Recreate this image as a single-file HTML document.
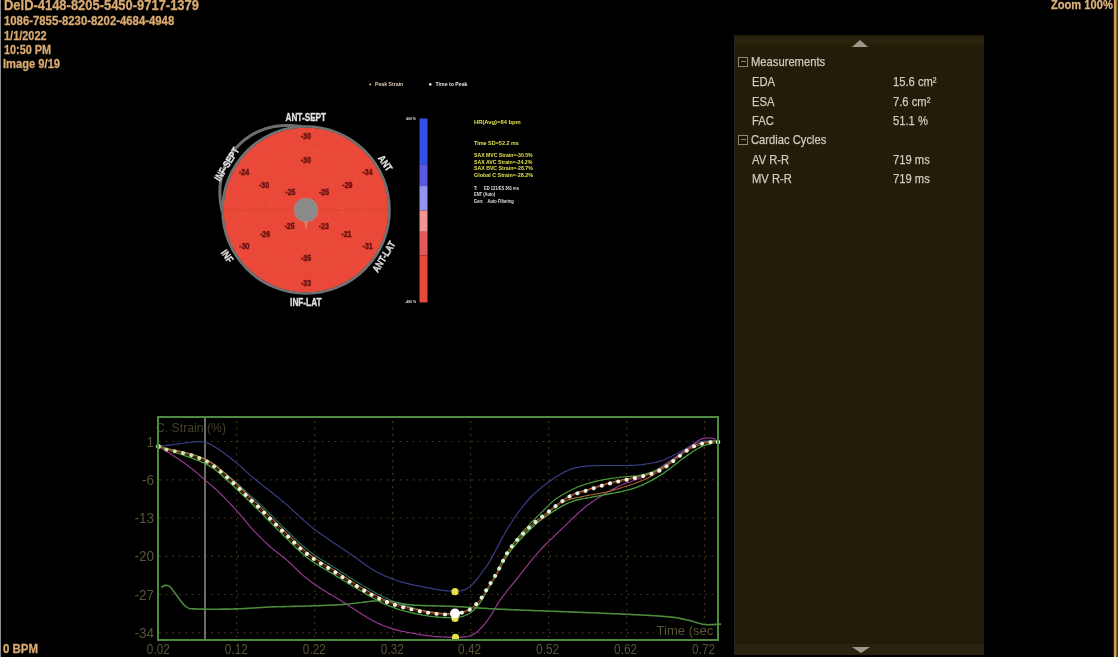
<!DOCTYPE html>
<html><head><meta charset="utf-8">
<style>
html,body{margin:0;padding:0;background:#000;}
body{width:1118px;height:657px;position:relative;overflow:hidden;font-family:"Liberation Sans",sans-serif;}
.t{position:absolute;white-space:nowrap;line-height:1;}
.or{color:#dcac70;font-weight:bold;-webkit-text-stroke:0.3px #d0a470;}
.panel{position:absolute;left:735px;top:35px;width:249px;height:620px;background:#221c08;}
.pt{position:absolute;white-space:nowrap;line-height:1;color:#d4d0c6;-webkit-text-stroke:0.25px #c8c4ba;font-size:13.2px;transform:scaleX(0.85);transform-origin:0 0;}
.box{position:absolute;width:8.4px;height:7.6px;border:1.3px solid #8e8870;background:#1c1808;}
.box:after{content:"";position:absolute;left:2px;top:3px;width:5px;height:1.2px;background:#8a8676;}
.ax{position:absolute;white-space:nowrap;line-height:1;color:#6a6440;font-size:11px;}
#wrap{position:absolute;left:0;top:0;width:1118px;height:657px;overflow:hidden;background:#000;filter:blur(0.35px);}
</style></head><body><div id="wrap">
<div style="position:absolute;left:0;top:0;width:1px;height:657px;background:#8a8d92"></div>
<div style="position:absolute;left:1113px;top:0;width:1px;height:657px;background:#3a1c08"></div>
<div style="position:absolute;left:1114px;top:0;width:2px;height:657px;background:#cc9a5e"></div>
<div style="position:absolute;left:1116px;top:0;width:1px;height:657px;background:#8a6a30"></div>
<div style="position:absolute;left:1117px;top:0;width:1px;height:657px;background:#4a3a12"></div>

<div class="t or" style="left:3.5px;top:-2px;font-size:14.3px;transform:scaleX(0.905);transform-origin:0 0">DeID-4148-8205-5450-9717-1379</div>
<div class="t or" style="left:3.5px;top:15.3px;font-size:12.4px;transform:scaleX(0.915);transform-origin:0 0">1086-7855-8230-8202-4684-4948</div>
<div class="t or" style="left:3.5px;top:29.7px;font-size:12.4px;transform:scaleX(0.884);transform-origin:0 0">1/1/2022</div>
<div class="t or" style="left:3.5px;top:44px;font-size:12.4px;transform:scaleX(0.878);transform-origin:0 0">10:50 PM</div>
<div class="t or" style="left:3px;top:58.4px;font-size:12.4px;transform:scaleX(0.9);transform-origin:0 0">Image 9/19</div>
<div class="t or" style="left:1050.5px;top:-2.5px;font-size:13px;transform:scaleX(0.855);transform-origin:0 0;color:#dcb67e">Zoom 100%</div>
<div class="t or" style="left:2.5px;top:643.4px;font-size:12.6px;transform:scaleX(0.91);transform-origin:0 0">0 BPM</div>

<!-- panel -->
<div style="position:absolute;left:734px;top:35px;width:2px;height:620px;background:#28261a"></div>
<div class="panel">
  <div style="position:absolute;left:0;top:0;width:249px;height:14px;background:linear-gradient(#201c06,#2c260e 40%,#221c08)"></div>
  <div style="position:absolute;left:117px;top:5px;width:0;height:0;border-left:8.5px solid transparent;border-right:8.5px solid transparent;border-bottom:7px solid #9c988c"></div>
  <div style="position:absolute;left:0;top:609px;width:249px;height:11px;background:#28220e"></div>
  <div style="position:absolute;left:116.5px;top:611.8px;width:0;height:0;border-left:9px solid transparent;border-right:9px solid transparent;border-top:6.5px solid #9c988c"></div>
  <div class="box" style="left:3px;top:22.0px"></div>
  <div class="pt" style="left:16px;top:20.3px">Measurements</div>
  <div class="pt" style="left:17px;top:40.3px">EDA</div>
  <div class="pt" style="left:158px;top:40.3px">15.6 cm²</div>
  <div class="pt" style="left:17px;top:60.3px">ESA</div>
  <div class="pt" style="left:158px;top:60.3px">7.6 cm²</div>
  <div class="pt" style="left:17px;top:79.3px">FAC</div>
  <div class="pt" style="left:158px;top:79.3px">51.1 %</div>
  <div class="box" style="left:3px;top:100.0px"></div>
  <div class="pt" style="left:16px;top:98.3px">Cardiac Cycles</div>
  <div class="pt" style="left:17px;top:118.3px">AV R-R</div>
  <div class="pt" style="left:158px;top:118.3px">719 ms</div>
  <div class="pt" style="left:17px;top:137.3px">MV R-R</div>
  <div class="pt" style="left:158px;top:137.3px">719 ms</div>
</div>

<svg width="1118" height="657" style="position:absolute;left:0;top:0">
<defs><filter id="nb" x="-20%" y="-20%" width="140%" height="140%"><feGaussianBlur stdDeviation="0.35"/></filter></defs>
<circle cx="306" cy="210" r="82.5" fill="#ea4838"/>
<path d="M301.6,126.1 L300.2,126.2 L298.7,126.3 L297.3,126.1 L295.8,125.9 L294.3,125.8 L292.8,125.7 L291.3,125.6 L289.8,125.5 L288.3,125.5 L286.8,125.5 L285.3,125.5 L283.8,125.5 L282.3,125.6 L280.7,125.7 L279.2,125.9 L277.7,126.1 L276.1,126.3 L274.6,126.5 L273.1,126.8 L271.6,127.1 L270.1,127.5 L268.5,127.9 L267.0,128.3 L265.5,128.7 L264.1,129.2 L262.6,129.8 L261.1,130.3 L259.6,130.9 L258.2,131.6 L256.8,132.2 L255.4,132.9 L254.0,133.7 L252.6,134.4 L251.2,135.2 L249.9,136.1 L248.5,137.0 L247.2,137.9 L245.9,138.8 L244.7,139.8 L243.4,140.8 L242.2,141.8 L241.0,142.9 L239.9,144.0 L238.7,145.1 L237.6,146.2 L236.5,147.4 L235.5,148.6 L234.5,149.8 L233.5,151.1 L232.5,152.4 L231.6,153.7 L230.7,155.0 L229.9,156.3 L229.0,157.7 L228.2,159.1 L227.5,160.5 L226.8,161.9 L226.1,163.3 L225.4,164.8 L224.8,166.2 L224.2,167.7 L223.7,169.2 L223.2,170.7 L222.7,172.2 L222.3,173.7 L221.9,175.2 L221.5,176.7 L221.2,178.3 L220.9,179.8 L220.7,181.4 L220.4,182.9 L220.3,184.4 L220.1,186.0 L220.0,187.5 L219.9,189.1 L219.9,190.6 L219.8,192.1 L219.9,193.7 L219.9,195.2 L220.0,196.7 L220.1,198.2 L220.2,199.7 L220.4,201.2 L220.6,202.7 L220.8,204.2 L221.1,205.7 L221.4,207.1 L221.7,208.6 L222.0,210.0 L222.0,211.5" fill="none" stroke="#6c6e70" stroke-width="3"/>
<circle cx="306" cy="210" r="83.5" fill="none" stroke="#707274" stroke-width="2.6"/>
<circle cx="306" cy="210" r="59.5" fill="none" stroke="#f48070" stroke-width="0.9" stroke-dasharray="4,9" opacity="0.3"/>
<circle cx="306" cy="210" r="36" fill="none" stroke="#f48070" stroke-width="0.9" stroke-dasharray="4,9" opacity="0.3"/>
<line x1="224" y1="210" x2="388" y2="210" stroke="#dc4434" stroke-width="0.8"/>
<line x1="306" y1="128" x2="306" y2="292" stroke="#dc4434" stroke-width="0.6" opacity="0.5"/>
<circle cx="306" cy="210" r="12" fill="#8a8a8a" stroke="#c08070" stroke-width="0.8"/>
<path d="M304,221 L306,232 L308,221 Z" fill="#d89080" opacity="0.6"/>
<text transform="translate(305.8,136.0) scale(0.8,1)" font-size="8.8" font-weight="bold" fill="#641410" stroke="#641410" stroke-width="0.45" text-anchor="middle" font-family="Liberation Sans, sans-serif" dominant-baseline="central" filter="url(#nb)">-30</text>
<text transform="translate(305.8,160.6) scale(0.8,1)" font-size="8.8" font-weight="bold" fill="#641410" stroke="#641410" stroke-width="0.45" text-anchor="middle" font-family="Liberation Sans, sans-serif" dominant-baseline="central" filter="url(#nb)">-30</text>
<text transform="translate(244.0,172.7) scale(0.8,1)" font-size="8.8" font-weight="bold" fill="#641410" stroke="#641410" stroke-width="0.45" text-anchor="middle" font-family="Liberation Sans, sans-serif" dominant-baseline="central" filter="url(#nb)">-24</text>
<text transform="translate(367.6,172.7) scale(0.8,1)" font-size="8.8" font-weight="bold" fill="#641410" stroke="#641410" stroke-width="0.45" text-anchor="middle" font-family="Liberation Sans, sans-serif" dominant-baseline="central" filter="url(#nb)">-34</text>
<text transform="translate(264.0,185.0) scale(0.8,1)" font-size="8.8" font-weight="bold" fill="#641410" stroke="#641410" stroke-width="0.45" text-anchor="middle" font-family="Liberation Sans, sans-serif" dominant-baseline="central" filter="url(#nb)">-30</text>
<text transform="translate(347.4,185.0) scale(0.8,1)" font-size="8.8" font-weight="bold" fill="#641410" stroke="#641410" stroke-width="0.45" text-anchor="middle" font-family="Liberation Sans, sans-serif" dominant-baseline="central" filter="url(#nb)">-29</text>
<text transform="translate(290.4,192.0) scale(0.8,1)" font-size="8.8" font-weight="bold" fill="#641410" stroke="#641410" stroke-width="0.45" text-anchor="middle" font-family="Liberation Sans, sans-serif" dominant-baseline="central" filter="url(#nb)">-25</text>
<text transform="translate(324.0,192.0) scale(0.8,1)" font-size="8.8" font-weight="bold" fill="#641410" stroke="#641410" stroke-width="0.45" text-anchor="middle" font-family="Liberation Sans, sans-serif" dominant-baseline="central" filter="url(#nb)">-25</text>
<text transform="translate(289.6,226.7) scale(0.8,1)" font-size="8.8" font-weight="bold" fill="#641410" stroke="#641410" stroke-width="0.45" text-anchor="middle" font-family="Liberation Sans, sans-serif" dominant-baseline="central" filter="url(#nb)">-25</text>
<text transform="translate(323.8,226.7) scale(0.8,1)" font-size="8.8" font-weight="bold" fill="#641410" stroke="#641410" stroke-width="0.45" text-anchor="middle" font-family="Liberation Sans, sans-serif" dominant-baseline="central" filter="url(#nb)">-23</text>
<text transform="translate(265.0,234.0) scale(0.8,1)" font-size="8.8" font-weight="bold" fill="#641410" stroke="#641410" stroke-width="0.45" text-anchor="middle" font-family="Liberation Sans, sans-serif" dominant-baseline="central" filter="url(#nb)">-26</text>
<text transform="translate(346.4,234.0) scale(0.8,1)" font-size="8.8" font-weight="bold" fill="#641410" stroke="#641410" stroke-width="0.45" text-anchor="middle" font-family="Liberation Sans, sans-serif" dominant-baseline="central" filter="url(#nb)">-21</text>
<text transform="translate(244.4,245.9) scale(0.8,1)" font-size="8.8" font-weight="bold" fill="#641410" stroke="#641410" stroke-width="0.45" text-anchor="middle" font-family="Liberation Sans, sans-serif" dominant-baseline="central" filter="url(#nb)">-30</text>
<text transform="translate(367.7,245.9) scale(0.8,1)" font-size="8.8" font-weight="bold" fill="#641410" stroke="#641410" stroke-width="0.45" text-anchor="middle" font-family="Liberation Sans, sans-serif" dominant-baseline="central" filter="url(#nb)">-31</text>
<text transform="translate(306.0,258.2) scale(0.8,1)" font-size="8.8" font-weight="bold" fill="#641410" stroke="#641410" stroke-width="0.45" text-anchor="middle" font-family="Liberation Sans, sans-serif" dominant-baseline="central" filter="url(#nb)">-35</text>
<text transform="translate(306.0,282.9) scale(0.8,1)" font-size="8.8" font-weight="bold" fill="#641410" stroke="#641410" stroke-width="0.45" text-anchor="middle" font-family="Liberation Sans, sans-serif" dominant-baseline="central" filter="url(#nb)">-33</text>
<text transform="translate(305.8,118.0) rotate(0) scale(0.8,1)" font-size="10.3" font-weight="bold" fill="#e4e4e4" stroke="#d8d8d8" stroke-width="0.35" text-anchor="middle" font-family="Liberation Sans, sans-serif" dominant-baseline="central">ANT-SEPT</text>
<text transform="translate(305.8,302.6) rotate(0) scale(0.8,1)" font-size="10.3" font-weight="bold" fill="#e4e4e4" stroke="#d8d8d8" stroke-width="0.35" text-anchor="middle" font-family="Liberation Sans, sans-serif" dominant-baseline="central">INF-LAT</text>
<text transform="translate(385.1,163.3) rotate(55) scale(0.8,1)" font-size="10.3" font-weight="bold" fill="#e4e4e4" stroke="#d8d8d8" stroke-width="0.35" text-anchor="middle" font-family="Liberation Sans, sans-serif" dominant-baseline="central">ANT</text>
<text transform="translate(384.0,256.8) rotate(-58) scale(0.8,1)" font-size="10.3" font-weight="bold" fill="#e4e4e4" stroke="#d8d8d8" stroke-width="0.35" text-anchor="middle" font-family="Liberation Sans, sans-serif" dominant-baseline="central">ANT-LAT</text>
<text transform="translate(226.9,164.4) rotate(-58) scale(0.8,1)" font-size="10.3" font-weight="bold" fill="#e4e4e4" stroke="#d8d8d8" stroke-width="0.35" text-anchor="middle" font-family="Liberation Sans, sans-serif" dominant-baseline="central">INF-SEPT</text>
<text transform="translate(227.1,256.2) rotate(55) scale(0.8,1)" font-size="10.3" font-weight="bold" fill="#e4e4e4" stroke="#d8d8d8" stroke-width="0.35" text-anchor="middle" font-family="Liberation Sans, sans-serif" dominant-baseline="central">INF</text>
<circle cx="370.2" cy="84.4" r="1" fill="#d8b890"/><text x="375" y="86" font-size="5.2" font-weight="bold" fill="#d8c8b0" font-family="Liberation Sans, sans-serif">Peak Strain</text>
<circle cx="430.3" cy="84.4" r="1.3" fill="#e0e0f0"/><text x="435.5" y="86" font-size="5.2" font-weight="bold" fill="#e0e0e0" font-family="Liberation Sans, sans-serif">Time to Peak</text>
<rect x="419.5" y="118.5" width="8" height="45.7" fill="#3050e8"/>
<rect x="419.5" y="164.2" width="8" height="21.9" fill="#5a5ae0"/>
<rect x="419.5" y="186.1" width="8" height="24.4" fill="#9494f0"/>
<rect x="419.5" y="210.5" width="8" height="21.3" fill="#f09494"/>
<rect x="419.5" y="231.8" width="8" height="23.7" fill="#e05a5a"/>
<rect x="419.5" y="255.5" width="8" height="46.9" fill="#e84a3a"/>
<text x="406" y="120" font-size="3.5" font-weight="bold" fill="#e0e0e0" font-family="Liberation Sans, sans-serif">400 %</text>
<text x="405" y="303" font-size="3.5" font-weight="bold" fill="#e0e0e0" font-family="Liberation Sans, sans-serif">-400 %</text>
<text transform="translate(474,123.6) scale(0.94,1)" font-size="6.2" font-weight="bold" fill="#e0e050" font-family="Liberation Sans, sans-serif">HR(Avg)=84 bpm</text>
<text transform="translate(474,144.5) scale(0.88,1)" font-size="6.2" font-weight="bold" fill="#e0e050" font-family="Liberation Sans, sans-serif">Time SD=52.2 ms</text>
<text transform="translate(474,157.1) scale(0.83,1)" font-size="6.2" font-weight="bold" fill="#e0e050" font-family="Liberation Sans, sans-serif">SAX MVC Strain=-30.5%</text>
<text transform="translate(474,163.5) scale(0.84,1)" font-size="6.2" font-weight="bold" fill="#e0e050" font-family="Liberation Sans, sans-serif">SAX AVC Strain=-24.2%</text>
<text transform="translate(474,170.0) scale(0.84,1)" font-size="6.2" font-weight="bold" fill="#e0e050" font-family="Liberation Sans, sans-serif">SAX BVC Strain=-28.7%</text>
<text transform="translate(474,176.8) scale(0.87,1)" font-size="6.2" font-weight="bold" fill="#e0e050" font-family="Liberation Sans, sans-serif">Global C Strain=-28.2%</text>
<text transform="translate(474,189.6) scale(0.88,1)" font-size="4.6" font-weight="bold" fill="#e0e0e0" font-family="Liberation Sans, sans-serif" xml:space="preserve">T:      ED 121/ES 361 ms</text>
<text transform="translate(474,196.0) scale(0.88,1)" font-size="4.6" font-weight="bold" fill="#e0e0e0" font-family="Liberation Sans, sans-serif" xml:space="preserve">ENT (Auto)  </text>
<text transform="translate(474,202.9) scale(0.88,1)" font-size="4.6" font-weight="bold" fill="#e0e0e0" font-family="Liberation Sans, sans-serif" xml:space="preserve">Gen:    Auto Filtering</text>
<defs><linearGradient id="dotg" gradientUnits="userSpaceOnUse" x1="158" y1="0" x2="718" y2="0"><stop offset="0" stop-color="#bfe8a8"/><stop offset="0.09" stop-color="#c8eab8"/><stop offset="0.14" stop-color="#f4f4e8"/><stop offset="0.55" stop-color="#f4f4ec"/><stop offset="0.6" stop-color="#d0f0d0"/><stop offset="0.72" stop-color="#d8f4e0"/><stop offset="0.8" stop-color="#f4f4f0"/><stop offset="1" stop-color="#e8f4e0"/></linearGradient></defs>
<line x1="159" y1="441.5" x2="717" y2="441.5" stroke="#38341a" stroke-width="1.2" stroke-dasharray="2,4.5"/>
<line x1="159" y1="479.8" x2="717" y2="479.8" stroke="#38341a" stroke-width="1.2" stroke-dasharray="2,4.5"/>
<line x1="159" y1="518.0" x2="717" y2="518.0" stroke="#38341a" stroke-width="1.2" stroke-dasharray="2,4.5"/>
<line x1="159" y1="556.3" x2="717" y2="556.3" stroke="#38341a" stroke-width="1.2" stroke-dasharray="2,4.5"/>
<line x1="159" y1="594.5" x2="717" y2="594.5" stroke="#38341a" stroke-width="1.2" stroke-dasharray="2,4.5"/>
<line x1="159" y1="632.8" x2="717" y2="632.8" stroke="#38341a" stroke-width="1.2" stroke-dasharray="2,4.5"/>
<line x1="236.6" y1="421" x2="236.6" y2="639" stroke="#38341a" stroke-width="1.2" stroke-dasharray="2,4.5"/>
<line x1="314.6" y1="421" x2="314.6" y2="639" stroke="#38341a" stroke-width="1.2" stroke-dasharray="2,4.5"/>
<line x1="392.6" y1="421" x2="392.6" y2="639" stroke="#38341a" stroke-width="1.2" stroke-dasharray="2,4.5"/>
<line x1="470.6" y1="421" x2="470.6" y2="639" stroke="#38341a" stroke-width="1.2" stroke-dasharray="2,4.5"/>
<line x1="548.6" y1="421" x2="548.6" y2="639" stroke="#38341a" stroke-width="1.2" stroke-dasharray="2,4.5"/>
<line x1="626.6" y1="421" x2="626.6" y2="639" stroke="#38341a" stroke-width="1.2" stroke-dasharray="2,4.5"/>
<line x1="704.6" y1="421" x2="704.6" y2="639" stroke="#38341a" stroke-width="1.2" stroke-dasharray="2,4.5"/><text transform="translate(154,446.5) scale(0.94,1)" font-size="14.4" fill="#5a5436" text-anchor="end" font-family="Liberation Sans, sans-serif">1</text>
<text transform="translate(154,484.8) scale(0.94,1)" font-size="14.4" fill="#5a5436" text-anchor="end" font-family="Liberation Sans, sans-serif">-6</text>
<text transform="translate(154,523.0) scale(0.94,1)" font-size="14.4" fill="#5a5436" text-anchor="end" font-family="Liberation Sans, sans-serif">-13</text>
<text transform="translate(154,561.3) scale(0.94,1)" font-size="14.4" fill="#5a5436" text-anchor="end" font-family="Liberation Sans, sans-serif">-20</text>
<text transform="translate(154,599.5) scale(0.94,1)" font-size="14.4" fill="#5a5436" text-anchor="end" font-family="Liberation Sans, sans-serif">-27</text>
<text transform="translate(154,637.8) scale(0.94,1)" font-size="14.4" fill="#5a5436" text-anchor="end" font-family="Liberation Sans, sans-serif">-34</text>
<text transform="translate(158.3,654.2) scale(0.82,1)" font-size="14.4" fill="#5a5436" text-anchor="middle" font-family="Liberation Sans, sans-serif">0.02</text>
<text transform="translate(236.3,654.2) scale(0.82,1)" font-size="14.4" fill="#5a5436" text-anchor="middle" font-family="Liberation Sans, sans-serif">0.12</text>
<text transform="translate(314.3,654.2) scale(0.82,1)" font-size="14.4" fill="#5a5436" text-anchor="middle" font-family="Liberation Sans, sans-serif">0.22</text>
<text transform="translate(392.3,654.2) scale(0.82,1)" font-size="14.4" fill="#5a5436" text-anchor="middle" font-family="Liberation Sans, sans-serif">0.32</text>
<text transform="translate(469.6,654.2) scale(0.82,1)" font-size="14.4" fill="#5a5436" text-anchor="middle" font-family="Liberation Sans, sans-serif">0.42</text>
<text transform="translate(547.6,654.2) scale(0.82,1)" font-size="14.4" fill="#5a5436" text-anchor="middle" font-family="Liberation Sans, sans-serif">0.52</text>
<text transform="translate(625.6,654.2) scale(0.82,1)" font-size="14.4" fill="#5a5436" text-anchor="middle" font-family="Liberation Sans, sans-serif">0.62</text>
<text transform="translate(703.6,654.2) scale(0.82,1)" font-size="14.4" fill="#5a5436" text-anchor="middle" font-family="Liberation Sans, sans-serif">0.72</text>
<text transform="translate(156,432.4) scale(0.9,1)" font-size="13.6" fill="#46422c" font-family="Liberation Sans, sans-serif">C. Strain (%)</text>
<rect x="654" y="622" width="62" height="15" fill="#000"/><text transform="translate(656.5,634.7) scale(0.96,1)" font-size="13.6" fill="#5a5436" font-family="Liberation Sans, sans-serif">Time (sec</text>
<line x1="205" y1="418" x2="205" y2="639" stroke="#888888" stroke-width="1.6"/>
<path d="M158.5,446.5 L160.8,446.2 L162.2,446.0 L164.0,445.8 L166.0,445.5 L168.2,445.2 L170.5,444.9 L172.7,444.6 L174.9,444.4 L177.0,444.1 L179.2,443.8 L181.3,443.5 L183.5,443.3 L185.6,443.0 L187.7,442.7 L189.8,442.5 L191.9,442.2 L194.0,442.0 L196.1,441.7 L198.2,441.6 L200.2,441.5 L202.2,441.7 L204.1,442.0 L206.0,442.5 L207.8,443.1 L209.6,443.9 L211.4,444.9 L213.2,445.9 L215.1,447.0 L216.9,448.2 L218.6,449.3 L220.3,450.5 L222.0,451.6 L223.6,452.8 L225.2,454.0 L226.8,455.2 L228.5,456.4 L230.1,457.7 L231.7,459.0 L233.3,460.3 L234.9,461.6 L236.5,462.9 L238.1,464.2 L239.6,465.6 L241.2,466.9 L242.7,468.3 L244.2,469.7 L245.7,471.1 L247.2,472.4 L248.7,473.8 L250.1,475.1 L251.6,476.4 L253.1,477.7 L254.6,479.0 L256.1,480.2 L257.7,481.5 L259.2,482.7 L260.7,483.9 L262.3,485.1 L263.8,486.3 L265.4,487.5 L267.0,488.7 L268.5,489.9 L270.1,491.2 L271.6,492.3 L273.1,493.5 L274.6,494.8 L276.1,496.0 L277.7,497.3 L279.3,498.6 L280.9,499.9 L282.6,501.3 L284.3,502.7 L285.9,504.1 L287.5,505.5 L289.0,506.8 L290.4,508.1 L291.9,509.4 L293.3,510.8 L294.8,512.1 L296.3,513.5 L297.8,514.9 L299.4,516.4 L300.9,517.8 L302.5,519.2 L304.0,520.6 L305.6,522.1 L307.2,523.4 L308.8,524.8 L310.4,526.1 L312.0,527.4 L313.6,528.7 L315.3,530.0 L317.0,531.2 L318.7,532.4 L320.4,533.7 L322.1,534.9 L323.8,536.1 L325.6,537.3 L327.3,538.5 L329.0,539.6 L330.7,540.7 L332.4,541.9 L334.0,542.9 L335.6,544.0 L337.2,545.1 L338.8,546.2 L340.4,547.3 L342.1,548.5 L343.9,549.6 L345.6,550.8 L347.3,552.0 L348.9,553.1 L350.5,554.1 L352.1,555.2 L353.6,556.3 L355.2,557.3 L356.7,558.4 L358.3,559.5 L359.9,560.7 L361.5,561.8 L363.1,563.0 L364.6,564.2 L366.3,565.4 L367.9,566.5 L369.6,567.7 L371.3,568.8 L373.1,569.9 L374.8,570.9 L376.5,571.8 L378.3,572.7 L380.0,573.6 L381.7,574.4 L383.5,575.2 L385.3,576.1 L387.2,576.8 L389.0,577.6 L391.0,578.4 L392.9,579.1 L394.9,579.8 L396.9,580.5 L398.9,581.2 L400.9,581.8 L402.8,582.3 L404.8,582.9 L406.9,583.4 L408.9,583.9 L411.0,584.4 L413.1,584.8 L415.3,585.3 L417.4,585.7 L419.5,586.2 L421.5,586.6 L423.5,586.9 L425.5,587.3 L427.4,587.7 L429.3,588.1 L431.3,588.4 L433.3,588.8 L435.4,589.2 L437.5,589.6 L439.5,589.9 L441.4,590.2 L443.3,590.4 L445.1,590.6 L447.0,590.8 L448.9,591.0 L450.9,591.1 L453.0,591.1 L455.1,591.1 L457.2,591.1 L459.3,590.9 L461.3,590.7 L463.2,590.2 L465.0,589.6 L466.7,588.8 L468.4,587.8 L469.9,586.7 L471.4,585.4 L472.8,584.0 L474.2,582.5 L475.5,580.9 L476.8,579.3 L478.1,577.7 L479.4,576.0 L480.6,574.3 L481.8,572.7 L482.9,571.2 L484.0,569.7 L485.1,568.3 L486.1,566.8 L487.2,565.3 L488.3,563.6 L489.4,561.8 L490.4,560.1 L491.4,558.4 L492.3,556.8 L493.1,555.1 L494.1,553.4 L495.0,551.7 L495.9,549.9 L496.9,548.0 L498.0,546.1 L499.0,544.1 L500.1,542.1 L501.1,540.1 L502.2,538.1 L503.3,536.1 L504.4,534.2 L505.4,532.3 L506.5,530.4 L507.6,528.6 L508.6,526.8 L509.7,525.1 L510.9,523.3 L512.0,521.5 L513.2,519.7 L514.4,517.9 L515.6,516.2 L516.8,514.5 L518.0,512.8 L519.2,511.1 L520.4,509.5 L521.6,508.0 L522.8,506.4 L524.0,504.9 L525.2,503.4 L526.4,502.0 L527.7,500.5 L529.0,499.0 L530.4,497.5 L531.9,496.0 L533.4,494.5 L535.0,493.1 L536.5,491.6 L538.1,490.3 L539.7,488.9 L541.3,487.7 L542.9,486.4 L544.5,485.2 L546.1,484.0 L547.7,482.8 L549.3,481.6 L551.0,480.5 L552.6,479.3 L554.3,478.1 L556.0,477.0 L557.8,475.9 L559.5,474.8 L561.2,473.8 L562.9,472.8 L564.6,471.9 L566.4,471.1 L568.1,470.3 L569.9,469.6 L571.6,468.9 L573.3,468.4 L575.0,467.9 L576.8,467.5 L578.6,467.1 L580.5,466.8 L582.6,466.5 L584.8,466.3 L587.0,466.1 L589.2,465.9 L591.2,465.8 L593.2,465.7 L595.1,465.6 L597.0,465.6 L599.0,465.5 L601.0,465.5 L603.1,465.5 L605.3,465.5 L607.4,465.5 L609.7,465.5 L611.9,465.5 L614.1,465.5 L616.4,465.5 L618.6,465.5 L620.8,465.5 L622.9,465.5 L625.0,465.5 L627.1,465.5 L629.1,465.4 L631.0,465.4 L633.0,465.3 L635.0,465.2 L637.2,465.0 L639.4,464.8 L641.7,464.6 L643.9,464.3 L646.0,464.0 L648.1,463.7 L650.0,463.4 L651.9,463.0 L653.7,462.7 L655.5,462.3 L657.2,461.8 L659.0,461.3 L660.8,460.8 L662.7,460.2 L664.5,459.5 L666.4,458.8 L668.2,458.0 L670.0,457.2 L671.7,456.3 L673.5,455.4 L675.3,454.5 L677.1,453.5 L678.9,452.6 L680.7,451.6 L682.6,450.5 L684.4,449.5 L686.3,448.4 L688.1,447.3 L690.0,446.2 L691.9,445.2 L693.7,444.3 L695.6,443.4 L697.5,442.6 L699.5,442.0 L701.6,441.5 L703.7,441.2 L705.9,440.9 L708.0,440.8 L710.0,440.8 L711.8,440.9 L713.3,440.9 L714.4,440.9" fill="none" stroke="#363e86" stroke-width="1.2"/>
<path d="M158.5,446.5 L160.3,447.6 L161.5,448.3 L162.9,449.2 L164.6,450.2 L166.4,451.3 L168.3,452.4 L170.2,453.6 L172.1,454.8 L173.9,456.0 L175.6,457.2 L177.4,458.3 L179.1,459.5 L180.8,460.7 L182.5,461.8 L184.2,463.0 L185.9,464.3 L187.6,465.5 L189.2,466.7 L190.9,467.9 L192.5,469.2 L194.1,470.5 L195.6,471.8 L197.2,473.1 L198.7,474.4 L200.2,475.7 L201.6,477.0 L203.1,478.3 L204.6,479.6 L206.0,480.9 L207.5,482.1 L209.0,483.4 L210.4,484.6 L211.9,485.9 L213.4,487.2 L214.9,488.5 L216.5,489.9 L218.0,491.3 L219.4,492.7 L220.9,494.1 L222.3,495.5 L223.7,496.9 L225.1,498.4 L226.5,499.9 L228.0,501.4 L229.5,502.9 L230.9,504.5 L232.4,506.0 L233.8,507.6 L235.2,509.1 L236.6,510.7 L238.0,512.2 L239.3,513.7 L240.7,515.3 L242.0,516.8 L243.3,518.4 L244.6,520.0 L245.9,521.5 L247.2,523.1 L248.5,524.6 L249.8,526.1 L251.1,527.6 L252.5,529.1 L253.8,530.6 L255.2,532.1 L256.7,533.6 L258.1,535.1 L259.6,536.6 L261.1,538.1 L262.5,539.6 L264.0,541.0 L265.5,542.4 L267.0,543.8 L268.5,545.2 L270.0,546.5 L271.6,547.9 L273.1,549.2 L274.7,550.5 L276.3,551.7 L277.9,553.0 L279.5,554.2 L281.1,555.4 L282.7,556.7 L284.3,558.0 L285.8,559.3 L287.4,560.6 L288.9,562.0 L290.4,563.3 L291.9,564.7 L293.3,566.1 L294.8,567.6 L296.3,569.0 L297.7,570.4 L299.2,571.8 L300.6,573.2 L302.1,574.6 L303.6,575.9 L305.2,577.2 L306.7,578.5 L308.4,579.8 L310.0,581.0 L311.7,582.2 L313.3,583.4 L315.0,584.5 L316.7,585.7 L318.3,586.8 L320.0,587.9 L321.7,589.0 L323.4,590.0 L325.1,591.1 L326.9,592.2 L328.6,593.2 L330.4,594.3 L332.1,595.3 L333.9,596.3 L335.6,597.4 L337.4,598.4 L339.1,599.5 L340.9,600.6 L342.6,601.7 L344.4,602.8 L346.1,604.0 L347.9,605.1 L349.6,606.3 L351.4,607.4 L353.1,608.6 L354.9,609.7 L356.6,610.8 L358.4,611.9 L360.1,613.1 L361.9,614.2 L363.6,615.3 L365.4,616.3 L367.1,617.4 L368.9,618.5 L370.6,619.5 L372.4,620.5 L374.3,621.4 L376.1,622.3 L378.0,623.3 L380.0,624.1 L382.0,625.0 L384.0,625.8 L385.9,626.5 L387.9,627.2 L389.8,627.9 L391.7,628.6 L393.6,629.2 L395.5,629.7 L397.4,630.2 L399.3,630.7 L401.3,631.1 L403.3,631.5 L405.3,631.9 L407.3,632.3 L409.2,632.6 L411.1,633.0 L413.1,633.4 L415.0,633.7 L417.1,634.1 L419.1,634.4 L421.2,634.8 L423.3,635.1 L425.5,635.4 L427.6,635.7 L429.7,636.0 L431.8,636.2 L433.9,636.5 L436.1,636.6 L438.3,636.8 L440.5,636.9 L442.7,637.0 L444.9,637.1 L447.1,637.2 L449.2,637.3 L451.2,637.3 L453.2,637.3 L455.2,637.4 L457.3,637.4 L459.4,637.3 L461.5,637.2 L463.6,637.1 L465.6,636.8 L467.5,636.5 L469.3,636.0 L471.1,635.4 L472.9,634.6 L474.6,633.6 L476.3,632.5 L477.8,631.3 L479.3,629.9 L480.7,628.5 L482.1,627.0 L483.4,625.5 L484.8,623.8 L486.1,622.1 L487.4,620.4 L488.6,618.7 L489.8,617.0 L490.9,615.3 L492.0,613.6 L493.0,611.9 L494.0,610.2 L494.9,608.5 L496.0,606.7 L497.0,604.9 L498.1,603.1 L499.3,601.4 L500.4,599.7 L501.5,598.1 L502.7,596.5 L503.8,595.0 L505.0,593.5 L506.2,592.0 L507.4,590.4 L508.7,588.8 L510.0,587.2 L511.3,585.6 L512.7,584.0 L514.0,582.3 L515.4,580.6 L516.7,579.0 L518.0,577.4 L519.3,575.8 L520.5,574.2 L521.8,572.6 L523.1,571.0 L524.3,569.3 L525.6,567.7 L526.9,566.0 L528.3,564.3 L529.6,562.7 L530.9,561.0 L532.2,559.4 L533.5,557.8 L534.8,556.2 L536.2,554.7 L537.5,553.1 L538.8,551.6 L540.2,550.1 L541.6,548.5 L543.1,547.0 L544.6,545.5 L546.0,544.0 L547.5,542.6 L549.0,541.1 L550.4,539.8 L551.9,538.4 L553.3,537.0 L554.7,535.6 L556.2,534.3 L557.7,532.9 L559.1,531.4 L560.6,530.0 L562.1,528.6 L563.6,527.1 L565.1,525.6 L566.7,524.1 L568.2,522.6 L569.7,521.2 L571.2,519.7 L572.6,518.3 L574.1,517.0 L575.5,515.6 L577.0,514.3 L578.4,513.0 L579.9,511.6 L581.4,510.3 L582.9,509.0 L584.4,507.8 L585.9,506.5 L587.5,505.3 L589.0,504.2 L590.7,503.0 L592.3,501.8 L594.0,500.7 L595.6,499.6 L597.2,498.6 L598.9,497.5 L600.5,496.5 L602.2,495.4 L603.9,494.4 L605.7,493.3 L607.5,492.2 L609.3,491.2 L611.2,490.1 L613.0,489.1 L614.9,488.2 L616.7,487.2 L618.6,486.3 L620.4,485.5 L622.2,484.7 L624.1,484.0 L625.9,483.3 L627.8,482.6 L629.7,482.0 L631.6,481.3 L633.5,480.7 L635.4,480.0 L637.4,479.3 L639.3,478.6 L641.2,477.8 L643.2,477.0 L645.0,476.2 L646.9,475.3 L648.7,474.3 L650.5,473.4 L652.3,472.4 L654.0,471.4 L655.8,470.3 L657.5,469.2 L659.3,468.1 L661.1,466.9 L662.8,465.8 L664.6,464.6 L666.4,463.4 L668.1,462.3 L669.8,461.1 L671.5,459.9 L673.2,458.8 L674.9,457.6 L676.6,456.4 L678.3,455.2 L680.1,454.0 L681.9,452.6 L683.7,451.3 L685.5,449.9 L687.3,448.5 L689.1,447.2 L690.8,445.9 L692.5,444.6 L694.2,443.4 L695.8,442.2 L697.4,441.1 L699.0,440.2 L700.6,439.3 L702.4,438.6 L704.4,438.1 L706.5,437.9 L708.6,437.8 L710.6,438.0 L712.3,438.3 L713.7,438.7 L715.8,439.3" fill="none" stroke="#983890" stroke-width="1.2"/>
<path d="M161.2,587.4 L163.1,586.2 L165.0,585.4 L166.9,585.2 L168.8,585.9 L170.4,587.2 L171.8,588.8 L173.0,590.4 L174.4,592.2 L175.7,594.1 L177.1,595.9 L178.4,597.7 L179.7,599.5 L181.0,601.3 L182.4,603.0 L183.7,604.6 L185.1,606.0 L186.6,607.1 L188.0,607.9 L189.3,608.5 L190.8,608.7 L192.9,608.9 L195.4,608.9 L197.8,609.0 L199.6,609.1 L201.3,609.1 L203.0,609.1 L204.8,609.1 L206.8,609.2 L208.8,609.2 L210.9,609.2 L213.1,609.2 L215.3,609.2 L217.5,609.2 L219.8,609.2 L222.0,609.1 L224.3,609.1 L226.5,609.1 L228.7,609.1 L230.8,609.0 L232.9,609.0 L234.9,608.9 L237.0,608.9 L239.1,608.8 L241.1,608.7 L243.2,608.6 L245.2,608.5 L247.2,608.4 L249.2,608.3 L251.2,608.1 L253.2,608.0 L255.1,607.9 L257.1,607.7 L259.1,607.6 L261.0,607.5 L263.0,607.4 L265.0,607.2 L267.0,607.1 L269.0,607.0 L271.0,607.0 L273.0,606.9 L274.9,606.8 L276.9,606.8 L278.9,606.7 L280.8,606.7 L282.8,606.6 L284.8,606.6 L286.7,606.5 L288.7,606.5 L290.7,606.5 L292.7,606.4 L294.7,606.4 L296.8,606.3 L298.8,606.3 L300.8,606.2 L302.9,606.2 L304.9,606.1 L307.0,606.0 L309.0,606.0 L311.0,605.9 L313.0,605.8 L315.1,605.8 L317.1,605.7 L319.2,605.6 L321.3,605.5 L323.4,605.5 L325.5,605.4 L327.6,605.3 L329.7,605.2 L331.7,605.1 L333.8,605.0 L335.8,604.9 L337.8,604.8 L339.7,604.7 L341.6,604.5 L343.7,604.4 L345.8,604.2 L348.0,604.0 L350.3,603.8 L352.5,603.5 L354.8,603.3 L357.0,603.0 L359.2,602.7 L361.3,602.5 L363.4,602.2 L365.4,601.9 L367.3,601.7 L369.2,601.5 L370.9,601.3 L372.7,601.1 L374.5,601.0 L376.6,600.8 L378.8,600.7 L380.8,600.6 L382.5,600.6 L384.1,600.7 L385.9,600.9 L387.8,601.1 L389.7,601.3 L391.4,601.6 L393.1,601.9 L394.7,602.2 L396.5,602.5 L398.3,602.9 L400.2,603.3 L402.3,603.7 L404.5,604.1 L406.9,604.4 L409.4,604.7 L411.8,604.9 L413.8,605.1 L415.6,605.2 L417.3,605.3 L419.1,605.4 L421.0,605.5 L422.9,605.6 L424.9,605.6 L426.9,605.7 L429.0,605.7 L431.1,605.8 L433.2,605.9 L435.4,605.9 L437.5,606.0 L439.7,606.0 L441.9,606.1 L444.1,606.1 L446.2,606.2 L448.4,606.3 L450.5,606.3 L452.6,606.4 L454.6,606.5 L456.6,606.6 L458.6,606.7 L460.5,606.8 L462.4,606.9 L464.1,607.0 L465.8,607.1 L467.4,607.2 L469.0,607.3 L470.6,607.4 L472.2,607.5 L473.8,607.6 L475.4,607.8 L477.1,607.9 L478.9,608.0 L480.8,608.1 L482.8,608.3 L484.9,608.4 L487.2,608.5 L489.7,608.7 L492.4,608.8 L495.3,609.0 L498.1,609.1 L500.4,609.2 L502.2,609.3 L503.8,609.4 L505.4,609.4 L507.0,609.5 L508.7,609.6 L510.5,609.6 L512.3,609.7 L514.1,609.8 L516.0,609.9 L517.9,609.9 L519.8,610.0 L521.8,610.1 L523.9,610.2 L525.9,610.3 L528.0,610.3 L530.1,610.4 L532.2,610.5 L534.4,610.6 L536.5,610.7 L538.7,610.7 L540.9,610.8 L543.1,610.9 L545.4,611.0 L547.6,611.1 L549.8,611.2 L552.1,611.2 L554.3,611.3 L556.5,611.4 L558.8,611.5 L561.0,611.6 L563.2,611.7 L565.4,611.7 L567.6,611.8 L569.8,611.9 L572.0,612.0 L574.1,612.1 L576.2,612.1 L578.3,612.2 L580.4,612.3 L582.4,612.4 L584.5,612.5 L586.4,612.5 L588.4,612.6 L590.3,612.7 L592.1,612.8 L594.0,612.8 L595.7,612.9 L597.5,613.0 L599.3,613.1 L601.5,613.2 L603.8,613.3 L606.3,613.4 L608.8,613.5 L611.3,613.6 L613.7,613.7 L616.0,613.8 L618.4,613.9 L620.7,614.0 L622.9,614.1 L625.2,614.2 L627.4,614.3 L629.5,614.4 L631.6,614.5 L633.7,614.6 L635.7,614.7 L637.7,614.8 L639.7,614.9 L641.6,615.0 L643.5,615.1 L645.3,615.2 L647.1,615.3 L648.9,615.4 L650.6,615.5 L652.3,615.6 L654.0,615.7 L655.6,615.8 L657.1,615.9 L658.7,616.0 L660.2,616.1 L661.7,616.2 L663.7,616.4 L666.4,616.6 L669.2,616.9 L671.7,617.1 L674.0,617.4 L676.0,617.7 L677.8,618.0 L679.4,618.3 L680.9,618.6 L682.4,618.9 L683.9,619.2 L685.4,619.6 L687.2,620.0 L689.2,620.4 L691.3,621.0 L693.3,621.6 L695.2,622.1 L697.1,622.7 L698.9,623.3 L700.8,623.8 L702.6,624.2 L704.6,624.4 L706.7,624.6 L709.0,624.7 L711.4,624.6 L713.7,624.6 L715.9,624.4 L718.0,624.3 L719.8,624.1 L721.1,624.1" fill="none" stroke="#4a8a3a" stroke-width="1.6"/>
<path d="M158.5,446.5 L160.7,447.6 L162.1,448.2 L163.8,448.8 L165.7,449.4 L167.7,449.9 L169.7,450.4 L171.8,450.7 L174.0,451.1 L176.2,451.5 L178.4,451.9 L180.5,452.3 L182.6,452.7 L184.6,453.1 L186.7,453.5 L188.7,454.0 L190.7,454.4 L192.7,454.9 L194.7,455.5 L196.6,456.1 L198.6,456.7 L200.6,457.4 L202.6,458.2 L204.5,459.0 L206.5,459.9 L208.3,460.8 L210.2,461.8 L211.9,462.8 L213.6,463.9 L215.3,465.1 L216.9,466.3 L218.5,467.6 L220.1,468.9 L221.6,470.2 L223.2,471.5 L224.8,472.8 L226.5,474.1 L228.1,475.5 L229.7,476.8 L231.3,478.2 L233.0,479.6 L234.6,481.0 L236.2,482.4 L237.7,483.8 L239.2,485.2 L240.8,486.7 L242.3,488.1 L243.8,489.5 L245.3,490.9 L246.7,492.3 L248.2,493.6 L249.6,494.9 L250.9,496.1 L252.3,497.3 L253.7,498.5 L255.2,499.7 L256.7,501.1 L258.2,502.5 L259.8,503.9 L261.2,505.3 L262.7,506.6 L264.0,508.0 L265.4,509.3 L266.8,510.7 L268.2,512.1 L269.7,513.6 L271.2,515.1 L272.7,516.6 L274.3,518.2 L275.8,519.8 L277.4,521.3 L278.9,522.8 L280.5,524.4 L282.0,525.9 L283.5,527.3 L285.0,528.8 L286.5,530.2 L288.0,531.7 L289.4,533.1 L290.9,534.5 L292.3,536.0 L293.8,537.4 L295.3,538.8 L296.7,540.2 L298.2,541.6 L299.7,543.0 L301.2,544.4 L302.7,545.7 L304.2,547.0 L305.7,548.3 L307.3,549.6 L308.9,550.9 L310.5,552.1 L312.1,553.3 L313.8,554.5 L315.4,555.6 L317.1,556.7 L318.8,557.8 L320.5,558.9 L322.2,560.0 L324.0,561.1 L325.7,562.1 L327.4,563.2 L329.1,564.2 L330.8,565.3 L332.5,566.3 L334.2,567.4 L335.9,568.4 L337.6,569.5 L339.3,570.6 L341.0,571.7 L342.7,572.8 L344.4,573.9 L346.1,575.0 L347.7,576.1 L349.4,577.2 L351.1,578.3 L352.8,579.3 L354.5,580.4 L356.2,581.5 L357.9,582.5 L359.6,583.5 L361.4,584.6 L363.1,585.6 L364.8,586.6 L366.6,587.7 L368.4,588.7 L370.1,589.7 L371.9,590.7 L373.7,591.7 L375.5,592.7 L377.3,593.7 L379.1,594.6 L380.9,595.5 L382.7,596.5 L384.5,597.4 L386.4,598.2 L388.2,599.1 L390.1,599.9 L392.0,600.7 L394.0,601.5 L395.9,602.3 L397.9,603.0 L399.9,603.7 L401.9,604.4 L403.9,605.1 L405.9,605.7 L407.9,606.4 L409.9,607.0 L411.8,607.6 L413.7,608.1 L415.6,608.7 L417.6,609.2 L419.6,609.8 L421.6,610.3 L423.7,610.9 L425.8,611.4 L428.0,611.9 L430.0,612.4 L432.1,612.8 L434.0,613.2 L436.0,613.5 L437.9,613.8 L439.8,614.1 L441.7,614.3 L443.8,614.5 L445.8,614.6 L447.9,614.6 L450.0,614.5 L452.0,614.3 L454.1,614.1 L456.1,613.8 L458.2,613.4 L460.2,613.0 L462.3,612.6 L464.3,612.1 L466.2,611.4 L468.0,610.6 L469.7,609.6 L471.3,608.5 L472.9,607.3 L474.4,605.9 L475.8,604.5 L477.2,603.1 L478.6,601.6 L479.9,600.0 L481.1,598.4 L482.3,596.7 L483.3,595.0 L484.4,593.2 L485.5,591.5 L486.5,589.6 L487.6,587.8 L488.7,586.1 L489.7,584.3 L490.8,582.6 L491.9,580.9 L493.0,579.2 L494.1,577.4 L495.2,575.6 L496.3,573.8 L497.4,572.0 L498.4,570.2 L499.3,568.4 L500.2,566.6 L501.0,564.9 L501.9,563.0 L502.8,561.2 L503.7,559.3 L504.7,557.4 L505.7,555.5 L506.8,553.7 L507.9,551.8 L509.0,550.1 L510.2,548.4 L511.4,546.7 L512.7,545.1 L514.0,543.5 L515.4,541.9 L516.8,540.3 L518.2,538.7 L519.6,537.1 L521.1,535.6 L522.5,534.1 L524.0,532.6 L525.4,531.2 L526.8,529.8 L528.2,528.4 L529.7,527.0 L531.3,525.6 L532.8,524.2 L534.4,522.8 L536.0,521.5 L537.6,520.2 L539.2,519.0 L540.7,517.8 L542.2,516.7 L543.8,515.5 L545.4,514.2 L547.0,512.9 L548.6,511.6 L550.3,510.3 L551.9,509.0 L553.6,507.8 L555.2,506.5 L556.8,505.3 L558.4,504.0 L560.0,502.8 L561.7,501.6 L563.3,500.4 L565.0,499.2 L566.6,498.2 L568.4,497.1 L570.1,496.2 L571.9,495.3 L573.7,494.6 L575.6,493.9 L577.5,493.3 L579.4,492.6 L581.4,492.1 L583.4,491.5 L585.5,490.9 L587.5,490.2 L589.4,489.6 L591.4,489.0 L593.3,488.4 L595.3,487.7 L597.3,487.1 L599.3,486.5 L601.4,485.8 L603.4,485.2 L605.5,484.6 L607.5,484.0 L609.6,483.5 L611.7,483.0 L613.8,482.5 L615.9,482.0 L618.0,481.5 L620.1,481.1 L622.2,480.6 L624.3,480.2 L626.3,479.8 L628.3,479.4 L630.3,478.9 L632.4,478.5 L634.4,478.1 L636.4,477.6 L638.5,477.2 L640.4,476.8 L642.3,476.3 L644.2,475.8 L646.1,475.3 L648.0,474.8 L649.8,474.3 L651.7,473.7 L653.6,473.1 L655.4,472.4 L657.3,471.7 L659.1,470.8 L661.0,469.9 L662.7,468.9 L664.4,467.8 L666.1,466.6 L667.8,465.4 L669.4,464.1 L671.1,462.8 L672.7,461.5 L674.4,460.2 L676.0,458.9 L677.6,457.6 L679.2,456.3 L680.9,455.0 L682.5,453.8 L684.2,452.5 L685.8,451.3 L687.5,450.1 L689.1,449.0 L690.8,448.0 L692.5,447.0 L694.3,446.2 L696.2,445.4 L698.2,444.7 L700.2,444.0 L702.2,443.5 L704.3,443.1 L706.3,442.7 L708.4,442.4 L710.4,442.2 L712.4,442.0 L714.2,442.0 L715.7,441.9 L718.0,442.0" fill="none" stroke="#2a8a80" stroke-width="1.1" opacity="0.85"/>
<path d="M158.5,447.0 L160.4,447.6 L161.6,448.0 L163.0,448.4 L164.7,448.9 L166.6,449.5 L168.7,450.2 L170.8,450.9 L173.0,451.6 L175.2,452.3 L177.4,453.1 L179.5,453.8 L181.5,454.5 L183.3,455.2 L185.2,455.8 L187.0,456.4 L188.9,457.1 L190.8,457.7 L192.7,458.4 L194.7,459.1 L196.6,459.9 L198.5,460.6 L200.5,461.4 L202.4,462.3 L204.3,463.2 L206.1,464.1 L207.9,465.1 L209.7,466.1 L211.4,467.2 L213.1,468.3 L214.7,469.5 L216.3,470.7 L217.9,472.0 L219.5,473.3 L221.0,474.6 L222.6,476.0 L224.1,477.4 L225.6,478.8 L227.1,480.2 L228.7,481.7 L230.2,483.1 L231.7,484.5 L233.2,485.9 L234.6,487.3 L236.1,488.7 L237.6,490.0 L239.1,491.4 L240.5,492.8 L242.0,494.2 L243.4,495.6 L244.9,496.9 L246.3,498.3 L247.8,499.7 L249.2,501.1 L250.6,502.5 L252.0,503.9 L253.5,505.3 L254.9,506.8 L256.3,508.2 L257.8,509.6 L259.2,511.0 L260.6,512.4 L262.1,513.9 L263.5,515.3 L265.0,516.8 L266.4,518.2 L267.9,519.7 L269.3,521.2 L270.7,522.6 L272.2,524.1 L273.6,525.6 L275.1,527.0 L276.5,528.5 L278.0,529.9 L279.5,531.4 L280.9,532.8 L282.4,534.3 L283.8,535.7 L285.3,537.2 L286.8,538.6 L288.2,540.1 L289.7,541.5 L291.1,543.0 L292.6,544.4 L294.1,545.8 L295.5,547.3 L297.0,548.7 L298.5,550.1 L300.0,551.5 L301.5,552.8 L303.0,554.1 L304.6,555.4 L306.1,556.7 L307.7,558.0 L309.4,559.2 L311.0,560.4 L312.7,561.6 L314.5,562.8 L316.2,563.9 L318.0,565.0 L319.7,566.1 L321.5,567.2 L323.3,568.2 L325.0,569.3 L326.8,570.3 L328.6,571.4 L330.3,572.4 L332.1,573.4 L333.8,574.5 L335.6,575.6 L337.3,576.6 L339.1,577.7 L340.8,578.8 L342.6,579.9 L344.3,581.0 L346.1,582.0 L347.8,583.1 L349.5,584.2 L351.3,585.2 L353.0,586.3 L354.8,587.3 L356.5,588.4 L358.3,589.4 L360.1,590.5 L361.9,591.5 L363.6,592.5 L365.4,593.6 L367.2,594.6 L369.0,595.6 L370.8,596.7 L372.5,597.7 L374.3,598.7 L376.2,599.7 L378.0,600.7 L379.8,601.6 L381.6,602.6 L383.5,603.5 L385.3,604.3 L387.2,605.1 L389.1,605.9 L391.0,606.7 L393.0,607.4 L394.9,608.1 L396.9,608.8 L399.0,609.4 L401.0,610.0 L403.0,610.6 L405.0,611.1 L407.1,611.6 L409.1,612.1 L411.0,612.6 L413.0,613.0 L415.0,613.5 L417.0,613.9 L419.0,614.3 L421.0,614.7 L423.1,615.1 L425.2,615.4 L427.4,615.8 L429.5,616.1 L431.5,616.3 L433.6,616.6 L435.6,616.8 L437.5,617.0 L439.4,617.2 L441.3,617.3 L443.3,617.5 L445.3,617.6 L447.4,617.6 L449.5,617.7 L451.6,617.7 L453.7,617.6 L455.7,617.5 L457.6,617.3 L459.5,617.0 L461.4,616.6 L463.3,616.1 L465.2,615.5 L467.0,614.7 L468.7,613.8 L470.4,612.8 L472.0,611.6 L473.5,610.2 L475.0,608.8 L476.4,607.2 L477.8,605.6 L479.1,604.0 L480.3,602.3 L481.4,600.6 L482.5,598.9 L483.5,597.1 L484.5,595.4 L485.5,593.6 L486.5,591.8 L487.5,590.0 L488.5,588.3 L489.5,586.6 L490.5,584.9 L491.5,583.2 L492.5,581.5 L493.6,579.7 L494.7,577.9 L495.7,576.1 L496.8,574.3 L497.7,572.6 L498.7,570.8 L499.6,569.1 L500.6,567.4 L501.5,565.6 L502.4,563.8 L503.4,562.0 L504.5,560.2 L505.5,558.4 L506.7,556.6 L507.8,554.8 L509.0,553.0 L510.2,551.4 L511.5,549.7 L512.7,548.1 L514.1,546.5 L515.4,544.9 L516.8,543.3 L518.2,541.7 L519.7,540.1 L521.1,538.5 L522.6,537.0 L524.0,535.5 L525.4,534.1 L526.8,532.6 L528.2,531.2 L529.6,529.8 L531.1,528.4 L532.6,527.0 L534.1,525.6 L535.5,524.4 L537.0,523.1 L538.5,521.9 L540.0,520.7 L541.6,519.5 L543.2,518.3 L544.8,517.2 L546.4,516.0 L548.1,514.9 L549.7,513.8 L551.4,512.7 L553.1,511.5 L554.9,510.4 L556.7,509.3 L558.5,508.2 L560.3,507.1 L562.1,506.1 L563.9,505.1 L565.7,504.2 L567.5,503.4 L569.3,502.5 L571.2,501.8 L573.2,501.1 L575.2,500.5 L577.2,500.0 L579.2,499.5 L581.2,499.1 L583.2,498.7 L585.1,498.4 L587.1,498.0 L589.1,497.7 L591.0,497.3 L593.0,496.9 L595.0,496.5 L597.0,496.2 L598.9,495.8 L600.9,495.5 L602.9,495.1 L605.0,494.7 L607.0,494.3 L609.1,493.9 L611.1,493.5 L613.1,493.1 L615.1,492.8 L617.0,492.4 L619.0,492.0 L621.1,491.6 L623.1,491.1 L625.1,490.7 L627.2,490.2 L629.2,489.6 L631.3,489.0 L633.3,488.4 L635.2,487.8 L637.1,487.1 L639.0,486.3 L640.8,485.6 L642.6,484.8 L644.4,484.0 L646.2,483.1 L648.0,482.2 L649.8,481.3 L651.6,480.4 L653.4,479.4 L655.2,478.4 L657.0,477.4 L658.7,476.3 L660.4,475.2 L662.2,474.1 L663.9,473.0 L665.5,471.8 L667.2,470.6 L668.9,469.3 L670.6,468.1 L672.2,466.8 L673.9,465.5 L675.5,464.2 L677.1,463.0 L678.7,461.7 L680.3,460.5 L681.9,459.3 L683.5,458.1 L685.2,456.9 L687.0,455.6 L688.7,454.4 L690.5,453.2 L692.3,452.0 L694.1,450.8 L695.8,449.8 L697.5,448.7 L699.2,447.8 L701.0,446.9 L702.9,446.1 L704.9,445.3 L706.9,444.6 L709.0,444.0 L711.1,443.5 L712.9,443.0 L714.6,442.7 L715.9,442.4 L718.0,442.0" fill="none" stroke="#48a040" stroke-width="1.3"/>
<path d="M159.5,445.5 L161.7,446.6 L163.1,447.2 L164.8,447.8 L166.7,448.4 L168.7,448.9 L170.7,449.4 L172.8,449.8 L175.0,450.2 L177.1,450.6 L179.3,451.1 L181.4,451.5 L183.5,452.0 L185.5,452.5 L187.5,453.0 L189.5,453.5 L191.5,454.0 L193.4,454.6 L195.4,455.2 L197.4,455.9 L199.3,456.7 L201.3,457.5 L203.2,458.3 L205.2,459.2 L207.0,460.1 L208.9,461.1 L210.7,462.2 L212.4,463.3 L214.1,464.5 L215.7,465.7 L217.3,467.0 L218.9,468.3 L220.4,469.6 L222.0,471.0 L223.5,472.3 L225.1,473.7 L226.6,475.0 L228.1,476.3 L229.6,477.7 L231.1,479.0 L232.7,480.4 L234.2,481.8 L235.7,483.2 L237.2,484.6 L238.7,486.1 L240.2,487.5 L241.7,489.0 L243.1,490.5 L244.6,492.0 L246.1,493.4 L247.5,494.8 L248.9,496.2 L250.3,497.5 L251.6,498.7 L253.0,500.0 L254.4,501.3 L255.8,502.6 L257.4,504.0 L258.9,505.5 L260.4,506.9 L261.8,508.3 L263.2,509.7 L264.6,511.1 L265.9,512.4 L267.3,513.9 L268.8,515.3 L270.3,516.9 L271.8,518.4 L273.3,519.9 L274.9,521.5 L276.4,523.1 L278.0,524.6 L279.5,526.2 L281.1,527.7 L282.6,529.2 L284.1,530.7 L285.5,532.1 L287.0,533.6 L288.5,535.0 L289.9,536.4 L291.4,537.9 L292.9,539.3 L294.3,540.7 L295.8,542.1 L297.3,543.5 L298.7,544.9 L300.2,546.3 L301.7,547.7 L303.2,549.0 L304.8,550.3 L306.3,551.6 L307.9,552.8 L309.5,554.1 L311.1,555.3 L312.7,556.5 L314.4,557.6 L316.1,558.8 L317.8,559.9 L319.5,561.0 L321.2,562.1 L322.9,563.1 L324.6,564.2 L326.3,565.2 L328.1,566.3 L329.8,567.3 L331.5,568.4 L333.2,569.4 L334.9,570.5 L336.6,571.6 L338.3,572.7 L340.0,573.8 L341.6,574.9 L343.3,576.0 L345.0,577.1 L346.7,578.2 L348.4,579.3 L350.1,580.4 L351.7,581.4 L353.4,582.5 L355.1,583.6 L356.8,584.6 L358.6,585.6 L360.3,586.7 L362.0,587.7 L363.8,588.7 L365.5,589.7 L367.3,590.7 L369.1,591.7 L370.9,592.7 L372.6,593.7 L374.4,594.6 L376.2,595.6 L378.1,596.5 L379.9,597.4 L381.7,598.3 L383.5,599.2 L385.4,600.0 L387.3,600.8 L389.1,601.6 L391.1,602.3 L393.0,603.0 L395.0,603.7 L397.0,604.3 L399.0,604.9 L401.1,605.5 L403.1,606.1 L405.2,606.6 L407.2,607.1 L409.2,607.6 L411.2,608.1 L413.2,608.5 L415.2,609.0 L417.1,609.4 L419.1,609.8 L421.2,610.3 L423.3,610.7 L425.5,611.1 L427.6,611.5 L429.8,611.8 L431.9,612.1 L433.9,612.4 L435.9,612.7 L437.8,612.9 L439.7,613.1 L441.7,613.3 L443.7,613.4 L445.8,613.5 L447.9,613.5 L450.0,613.5 L452.0,613.4 L454.1,613.2 L456.1,612.9 L458.1,612.6 L460.2,612.2 L462.3,611.8 L464.3,611.3 L466.2,610.7 L468.1,610.0 L469.9,609.1 L471.5,608.1 L473.1,606.9 L474.6,605.6 L476.1,604.2 L477.5,602.8 L478.9,601.3 L480.2,599.8 L481.5,598.2 L482.7,596.5 L483.8,594.8 L484.9,593.1 L485.9,591.4 L487.0,589.6 L488.1,587.7 L489.1,586.0 L490.2,584.2 L491.3,582.5 L492.4,580.8 L493.4,579.1 L494.6,577.3 L495.7,575.5 L496.8,573.7 L497.9,571.9 L498.9,570.1 L499.8,568.3 L500.7,566.5 L501.6,564.8 L502.5,563.0 L503.4,561.1 L504.3,559.3 L505.2,557.4 L506.2,555.5 L507.2,553.6 L508.3,551.8 L509.5,550.0 L510.6,548.2 L511.8,546.5 L513.1,544.9 L514.4,543.3 L515.7,541.7 L517.1,540.1 L518.5,538.5 L519.9,536.9 L521.4,535.4 L522.8,533.8 L524.2,532.4 L525.7,530.9 L527.1,529.5 L528.5,528.1 L530.0,526.7 L531.5,525.3 L533.0,523.9 L534.6,522.5 L536.2,521.1 L537.8,519.8 L539.4,518.6 L540.9,517.4 L542.5,516.2 L544.0,515.1 L545.6,513.8 L547.2,512.6 L548.8,511.3 L550.5,510.0 L552.1,508.7 L553.8,507.4 L555.4,506.1 L557.0,504.9 L558.6,503.6 L560.2,502.4 L561.9,501.2 L563.5,500.0 L565.1,498.8 L566.8,497.7 L568.5,496.6 L570.2,495.6 L572.0,494.7 L573.8,493.9 L575.6,493.2 L577.5,492.6 L579.4,491.9 L581.4,491.4 L583.4,490.8 L585.5,490.2 L587.5,489.6 L589.5,488.9 L591.4,488.3 L593.3,487.7 L595.3,487.1 L597.3,486.4 L599.3,485.8 L601.3,485.1 L603.4,484.5 L605.5,483.9 L607.5,483.3 L609.6,482.8 L611.7,482.2 L613.7,481.7 L615.8,481.2 L618.0,480.8 L620.1,480.3 L622.2,479.9 L624.3,479.4 L626.3,479.0 L628.3,478.6 L630.3,478.2 L632.3,477.7 L634.4,477.3 L636.4,476.9 L638.5,476.4 L640.4,476.0 L642.4,475.5 L644.3,475.1 L646.2,474.6 L648.1,474.1 L649.9,473.5 L651.8,473.0 L653.6,472.4 L655.5,471.8 L657.3,471.0 L659.2,470.2 L661.1,469.3 L662.8,468.4 L664.6,467.3 L666.3,466.2 L667.9,465.0 L669.6,463.8 L671.2,462.5 L672.9,461.2 L674.6,459.8 L676.2,458.5 L677.8,457.2 L679.4,455.9 L681.0,454.7 L682.7,453.4 L684.3,452.1 L686.0,450.9 L687.7,449.7 L689.3,448.5 L690.9,447.5 L692.6,446.5 L694.4,445.6 L696.2,444.7 L698.2,444.0 L700.2,443.3 L702.2,442.8 L704.3,442.3 L706.3,441.9 L708.4,441.5 L710.4,441.3 L712.4,441.1 L714.3,441.0 L716.0,440.9 L717.2,440.9" fill="none" stroke="#b87030" stroke-width="1.1"/>
<path d="M497.0,571.0 L497.8,569.6 L498.4,568.4 L499.1,567.0 L500.0,565.4 L500.9,563.7 L501.9,561.8 L503.0,559.8 L504.1,557.8 L505.2,555.8 L506.4,553.8 L507.6,551.8 L508.8,549.9 L510.0,548.1 L511.2,546.4 L512.4,544.7 L513.6,543.1 L514.9,541.4 L516.2,539.7 L517.6,538.1 L518.9,536.5 L520.3,534.9 L521.6,533.3 L523.0,531.7 L524.3,530.2 L525.6,528.7 L526.9,527.3 L528.2,525.8 L529.7,524.2 L531.2,522.6 L532.7,521.0 L534.2,519.6 L535.6,518.1 L537.0,516.8 L538.4,515.4 L539.9,514.0 L541.3,512.6 L542.7,511.2 L544.2,509.8 L545.6,508.3 L547.0,506.8 L548.5,505.4 L550.0,503.9 L551.5,502.5 L553.2,501.1 L554.8,499.8 L556.5,498.6 L558.2,497.5 L559.8,496.4 L561.5,495.3 L563.3,494.3 L565.1,493.2 L567.0,492.2 L568.8,491.2 L570.7,490.3 L572.6,489.3 L574.5,488.5 L576.3,487.6 L578.2,486.8 L580.1,486.1 L582.1,485.4 L584.0,484.7 L586.0,484.1 L588.0,483.5 L589.9,482.9 L591.9,482.4 L593.8,481.9 L595.8,481.4 L597.8,480.9 L599.7,480.5 L601.8,480.1 L603.8,479.7 L605.8,479.3 L607.8,478.9 L609.9,478.6 L611.9,478.3 L613.9,478.0 L615.9,477.8 L618.0,477.5 L620.0,477.2 L622.1,477.0 L624.1,476.8 L626.2,476.7 L628.2,476.5 L630.3,476.4 L632.3,476.2 L634.4,476.0 L636.5,475.8 L638.5,475.5 L640.5,475.1 L642.6,474.7 L644.6,474.2 L646.6,473.6 L648.6,473.0 L650.6,472.4 L652.6,471.7 L654.5,470.9 L656.5,470.2 L658.4,469.3 L660.3,468.5 L662.1,467.6 L664.0,466.6 L665.8,465.5 L667.6,464.3 L669.3,463.1 L671.1,461.8 L672.8,460.5 L674.4,459.2 L676.0,458.0 L677.7,456.7 L679.3,455.5 L681.0,454.3 L682.8,453.1 L684.5,451.8 L686.3,450.6 L688.0,449.5 L689.7,448.4 L691.4,447.4 L693.2,446.5 L695.1,445.7 L697.1,444.9 L699.2,444.2 L701.2,443.7 L703.3,443.2 L705.3,442.7 L707.3,442.4 L709.4,442.1 L711.5,441.9 L713.6,441.9 L715.3,441.9 L716.7,441.9" fill="none" stroke="#4a9a3a" stroke-width="1.2"/>
<path d="M488.7,586.0 L489.7,584.5 L490.5,583.3 L491.4,581.7 L492.6,580.0 L493.8,578.1 L495.0,576.0 L496.3,574.0 L497.4,572.0 L498.4,570.2 L499.3,568.5 L500.2,566.8 L501.0,565.0 L501.9,563.2 L502.8,561.4 L503.7,559.6 L504.7,557.7 L505.7,555.9 L506.7,554.0 L507.8,552.2 L509.0,550.5 L510.2,548.8 L511.4,547.2 L512.7,545.6 L514.0,544.1 L515.3,542.5 L516.8,540.9 L518.2,539.3 L519.6,537.8 L521.1,536.2 L522.6,534.7 L524.0,533.3 L525.4,531.9 L526.8,530.5 L528.2,529.2 L529.7,527.8 L531.3,526.4 L532.9,525.0 L534.5,523.7 L536.1,522.5 L537.7,521.3 L539.3,520.2 L540.9,519.0 L542.5,517.8 L544.1,516.6 L545.7,515.4 L547.3,514.1 L548.8,512.8 L550.4,511.4 L552.0,510.0 L553.6,508.7 L555.2,507.3 L556.9,506.0 L558.5,504.8 L560.3,503.6 L562.1,502.6 L563.9,501.7 L565.8,500.9 L567.7,500.1 L569.7,499.5 L571.7,498.9 L573.8,498.4 L575.8,497.9 L577.9,497.5 L580.0,497.1 L582.0,496.6 L584.0,496.2 L586.0,495.8 L588.0,495.4 L590.0,495.0 L592.0,494.7 L594.0,494.4 L595.9,494.0 L597.9,493.7 L599.9,493.4 L601.8,493.0 L603.8,492.6 L605.8,492.2 L607.7,491.7 L609.7,491.2 L611.6,490.7 L613.6,490.1 L615.6,489.5 L617.5,488.9 L619.5,488.3 L621.5,487.7 L623.4,487.1 L625.4,486.4 L627.3,485.8 L629.2,485.2 L631.1,484.5 L633.0,483.9 L634.9,483.3 L636.8,482.6 L638.7,481.9 L640.6,481.2 L642.4,480.5 L644.3,479.7 L646.1,478.8 L647.9,478.0 L649.7,477.0 L651.5,476.0 L653.3,475.0 L655.0,473.9 L656.7,472.8 L658.5,471.6 L660.2,470.5 L661.9,469.3 L663.7,468.0 L665.4,466.8 L667.1,465.6 L668.7,464.4 L670.4,463.2 L672.0,462.0 L673.6,460.7 L675.2,459.4 L676.7,458.2 L678.3,456.9 L679.9,455.6 L681.5,454.4 L683.1,453.2 L684.8,452.1 L686.5,451.0 L688.2,450.0 L690.1,449.0 L692.1,448.1 L694.3,447.2 L696.4,446.3 L698.6,445.5 L700.7,444.8 L702.7,444.1 L704.5,443.5 L706.1,443.0 L707.4,442.5 L709.0,442.0" fill="none" stroke="#a86a30" stroke-width="1.1"/>
<path d="M158.5,447.0 L160.7,448.1 L162.1,448.7 L163.8,449.3 L165.7,449.9 L167.7,450.4 L169.7,450.9 L171.8,451.3 L174.0,451.7 L176.1,452.1 L178.3,452.6 L180.4,453.0 L182.5,453.5 L184.5,454.0 L186.5,454.5 L188.5,455.0 L190.5,455.5 L192.4,456.1 L194.4,456.7 L196.4,457.4 L198.3,458.2 L200.3,459.0 L202.2,459.8 L204.2,460.7 L206.0,461.6 L207.9,462.6 L209.7,463.7 L211.4,464.8 L213.1,466.0 L214.7,467.2 L216.3,468.5 L217.9,469.8 L219.4,471.1 L221.0,472.5 L222.5,473.8 L224.1,475.2 L225.6,476.5 L227.1,477.8 L228.6,479.2 L230.1,480.5 L231.7,481.9 L233.2,483.3 L234.7,484.7 L236.2,486.1 L237.7,487.6 L239.2,489.0 L240.7,490.5 L242.1,492.0 L243.6,493.5 L245.1,494.9 L246.5,496.3 L247.9,497.7 L249.3,499.0 L250.6,500.2 L252.0,501.5 L253.4,502.8 L254.8,504.1 L256.4,505.5 L257.9,507.0 L259.4,508.4 L260.8,509.8 L262.2,511.2 L263.6,512.6 L264.9,513.9 L266.3,515.4 L267.8,516.8 L269.3,518.4 L270.8,519.9 L272.3,521.4 L273.9,523.0 L275.4,524.6 L277.0,526.1 L278.5,527.7 L280.1,529.2 L281.6,530.7 L283.1,532.2 L284.5,533.6 L286.0,535.1 L287.5,536.5 L288.9,537.9 L290.4,539.4 L291.9,540.8 L293.3,542.2 L294.8,543.6 L296.3,545.0 L297.7,546.4 L299.2,547.8 L300.7,549.2 L302.2,550.5 L303.8,551.8 L305.3,553.1 L306.9,554.3 L308.5,555.6 L310.1,556.8 L311.7,558.0 L313.4,559.1 L315.1,560.3 L316.8,561.4 L318.5,562.5 L320.2,563.6 L321.9,564.6 L323.6,565.7 L325.3,566.7 L327.1,567.8 L328.8,568.8 L330.5,569.9 L332.2,570.9 L333.9,572.0 L335.6,573.1 L337.3,574.2 L339.0,575.3 L340.6,576.4 L342.3,577.5 L344.0,578.6 L345.7,579.7 L347.4,580.8 L349.1,581.9 L350.7,582.9 L352.4,584.0 L354.1,585.1 L355.8,586.1 L357.6,587.1 L359.3,588.2 L361.0,589.2 L362.8,590.2 L364.5,591.2 L366.3,592.2 L368.1,593.2 L369.9,594.2 L371.6,595.2 L373.4,596.1 L375.2,597.1 L377.1,598.0 L378.9,598.9 L380.7,599.8 L382.5,600.7 L384.4,601.5 L386.3,602.3 L388.1,603.1 L390.1,603.8 L392.0,604.5 L394.0,605.2 L396.0,605.8 L398.0,606.4 L400.1,607.0 L402.1,607.6 L404.2,608.1 L406.2,608.6 L408.2,609.1 L410.2,609.6 L412.2,610.0 L414.2,610.5 L416.1,610.9 L418.1,611.3 L420.2,611.8 L422.3,612.2 L424.5,612.6 L426.6,613.0 L428.8,613.3 L430.9,613.6 L432.9,613.9 L434.9,614.2 L436.8,614.4 L438.7,614.6 L440.7,614.8 L442.7,614.9 L444.8,615.0 L446.9,615.0 L449.0,615.0 L451.0,614.9 L453.1,614.7 L455.1,614.4 L457.1,614.1 L459.2,613.7 L461.3,613.3 L463.3,612.8 L465.2,612.2 L467.1,611.5 L468.9,610.6 L470.5,609.6 L472.1,608.4 L473.6,607.1 L475.1,605.7 L476.5,604.3 L477.9,602.8 L479.2,601.3 L480.5,599.7 L481.7,598.0 L482.8,596.3 L483.9,594.6 L484.9,592.9 L486.0,591.1 L487.1,589.2 L488.1,587.5 L489.2,585.7 L490.3,584.0 L491.4,582.3 L492.4,580.6 L493.6,578.8 L494.7,577.0 L495.8,575.2 L496.9,573.4 L497.9,571.6 L498.8,569.8 L499.7,568.0 L500.6,566.3 L501.5,564.5 L502.4,562.6 L503.3,560.8 L504.2,558.9 L505.2,557.0 L506.2,555.1 L507.3,553.3 L508.5,551.5 L509.6,549.7 L510.8,548.0 L512.1,546.4 L513.4,544.8 L514.7,543.2 L516.1,541.6 L517.5,540.0 L518.9,538.4 L520.4,536.9 L521.8,535.3 L523.2,533.9 L524.7,532.4 L526.1,531.0 L527.5,529.6 L529.0,528.2 L530.5,526.8 L532.0,525.4 L533.6,524.0 L535.2,522.6 L536.8,521.3 L538.4,520.1 L539.9,518.9 L541.5,517.7 L543.0,516.6 L544.6,515.3 L546.2,514.1 L547.8,512.8 L549.5,511.5 L551.1,510.2 L552.8,508.9 L554.4,507.6 L556.0,506.4 L557.6,505.1 L559.2,503.9 L560.9,502.7 L562.5,501.5 L564.1,500.3 L565.8,499.2 L567.5,498.1 L569.2,497.1 L571.0,496.2 L572.8,495.4 L574.6,494.7 L576.5,494.1 L578.4,493.4 L580.4,492.9 L582.4,492.3 L584.5,491.7 L586.5,491.1 L588.5,490.4 L590.4,489.8 L592.3,489.2 L594.3,488.6 L596.3,487.9 L598.3,487.3 L600.3,486.6 L602.4,486.0 L604.5,485.4 L606.5,484.8 L608.6,484.3 L610.7,483.7 L612.7,483.2 L614.8,482.7 L617.0,482.3 L619.1,481.8 L621.2,481.4 L623.3,480.9 L625.3,480.5 L627.3,480.1 L629.3,479.7 L631.3,479.2 L633.4,478.8 L635.4,478.4 L637.5,477.9 L639.4,477.5 L641.4,477.0 L643.3,476.6 L645.2,476.1 L647.1,475.6 L648.9,475.0 L650.8,474.5 L652.6,473.9 L654.5,473.3 L656.3,472.5 L658.2,471.7 L660.1,470.8 L661.8,469.9 L663.6,468.8 L665.3,467.7 L666.9,466.5 L668.6,465.3 L670.2,464.0 L671.9,462.7 L673.6,461.3 L675.2,460.0 L676.8,458.7 L678.4,457.4 L680.0,456.2 L681.7,454.9 L683.3,453.6 L685.0,452.4 L686.7,451.2 L688.3,450.0 L689.9,449.0 L691.6,448.0 L693.4,447.1 L695.2,446.2 L697.2,445.5 L699.2,444.8 L701.2,444.3 L703.3,443.8 L705.3,443.4 L707.4,443.0 L709.4,442.8 L711.4,442.6 L713.3,442.5 L715.0,442.4 L716.2,442.4" fill="none" stroke="#7a2214" stroke-width="1.1"/>
<path d="M158.5,446.5 L160.7,447.6 L162.1,448.2 L163.8,448.8 L165.7,449.4 L167.7,449.9 L169.7,450.4 L171.8,450.8 L174.0,451.2 L176.1,451.6 L178.3,452.1 L180.4,452.5 L182.5,453.0 L184.5,453.5 L186.5,454.0 L188.5,454.5 L190.5,455.0 L192.4,455.6 L194.4,456.2 L196.4,456.9 L198.3,457.7 L200.3,458.5 L202.2,459.3 L204.2,460.2 L206.0,461.1 L207.9,462.1 L209.7,463.2 L211.4,464.3 L213.1,465.5 L214.7,466.7 L216.3,468.0 L217.9,469.3 L219.4,470.6 L221.0,472.0 L222.5,473.3 L224.1,474.7 L225.6,476.0 L227.1,477.3 L228.6,478.7 L230.1,480.0 L231.7,481.4 L233.2,482.8 L234.7,484.2 L236.2,485.6 L237.7,487.1 L239.2,488.5 L240.7,490.0 L242.1,491.5 L243.6,493.0 L245.1,494.4 L246.5,495.8 L247.9,497.2 L249.3,498.5 L250.6,499.7 L252.0,501.0 L253.4,502.3 L254.8,503.6 L256.4,505.0 L257.9,506.5 L259.4,507.9 L260.8,509.3 L262.2,510.7 L263.6,512.1 L264.9,513.4 L266.3,514.9 L267.8,516.3 L269.3,517.9 L270.8,519.4 L272.3,520.9 L273.9,522.5 L275.4,524.1 L277.0,525.6 L278.5,527.2 L280.1,528.7 L281.6,530.2 L283.1,531.7 L284.5,533.1 L286.0,534.6 L287.5,536.0 L288.9,537.4 L290.4,538.9 L291.9,540.3 L293.3,541.7 L294.8,543.1 L296.3,544.5 L297.7,545.9 L299.2,547.3 L300.7,548.7 L302.2,550.0 L303.8,551.3 L305.3,552.6 L306.9,553.8 L308.5,555.1 L310.1,556.3 L311.7,557.5 L313.4,558.6 L315.1,559.8 L316.8,560.9 L318.5,562.0 L320.2,563.1 L321.9,564.1 L323.6,565.2 L325.3,566.2 L327.1,567.3 L328.8,568.3 L330.5,569.4 L332.2,570.4 L333.9,571.5 L335.6,572.6 L337.3,573.7 L339.0,574.8 L340.6,575.9 L342.3,577.0 L344.0,578.1 L345.7,579.2 L347.4,580.3 L349.1,581.4 L350.7,582.4 L352.4,583.5 L354.1,584.6 L355.8,585.6 L357.6,586.6 L359.3,587.7 L361.0,588.7 L362.8,589.7 L364.5,590.7 L366.3,591.7 L368.1,592.7 L369.9,593.7 L371.6,594.7 L373.4,595.6 L375.2,596.6 L377.1,597.5 L378.9,598.4 L380.7,599.3 L382.5,600.2 L384.4,601.0 L386.3,601.8 L388.1,602.6 L390.1,603.3 L392.0,604.0 L394.0,604.7 L396.0,605.3 L398.0,605.9 L400.1,606.5 L402.1,607.1 L404.2,607.6 L406.2,608.1 L408.2,608.6 L410.2,609.1 L412.2,609.5 L414.2,610.0 L416.1,610.4 L418.1,610.8 L420.2,611.3 L422.3,611.7 L424.5,612.1 L426.6,612.5 L428.8,612.8 L430.9,613.1 L432.9,613.4 L434.9,613.7 L436.8,613.9 L438.7,614.1 L440.7,614.3 L442.7,614.4 L444.8,614.5 L446.9,614.5 L449.0,614.5 L451.0,614.4 L453.1,614.2 L455.1,613.9 L457.1,613.6 L459.2,613.2 L461.3,612.8 L463.3,612.3 L465.2,611.7 L467.1,611.0 L468.9,610.1 L470.5,609.1 L472.1,607.9 L473.6,606.6 L475.1,605.2 L476.5,603.8 L477.9,602.3 L479.2,600.8 L480.5,599.2 L481.7,597.5 L482.8,595.8 L483.9,594.1 L484.9,592.4 L486.0,590.6 L487.1,588.7 L488.1,587.0 L489.2,585.2 L490.3,583.5 L491.4,581.8 L492.4,580.1 L493.6,578.3 L494.7,576.5 L495.8,574.7 L496.9,572.9 L497.9,571.1 L498.8,569.3 L499.7,567.5 L500.6,565.8 L501.5,564.0 L502.4,562.1 L503.3,560.3 L504.2,558.4 L505.2,556.5 L506.2,554.6 L507.3,552.8 L508.5,551.0 L509.6,549.2 L510.8,547.5 L512.1,545.9 L513.4,544.3 L514.7,542.7 L516.1,541.1 L517.5,539.5 L518.9,537.9 L520.4,536.4 L521.8,534.8 L523.2,533.4 L524.7,531.9 L526.1,530.5 L527.5,529.1 L529.0,527.7 L530.5,526.3 L532.0,524.9 L533.6,523.5 L535.2,522.1 L536.8,520.8 L538.4,519.6 L539.9,518.4 L541.5,517.2 L543.0,516.1 L544.6,514.8 L546.2,513.6 L547.8,512.3 L549.5,511.0 L551.1,509.7 L552.8,508.4 L554.4,507.1 L556.0,505.9 L557.6,504.6 L559.2,503.4 L560.9,502.2 L562.5,501.0 L564.1,499.8 L565.8,498.7 L567.5,497.6 L569.2,496.6 L571.0,495.7 L572.8,494.9 L574.6,494.2 L576.5,493.6 L578.4,492.9 L580.4,492.4 L582.4,491.8 L584.5,491.2 L586.5,490.6 L588.5,489.9 L590.4,489.3 L592.3,488.7 L594.3,488.1 L596.3,487.4 L598.3,486.8 L600.3,486.1 L602.4,485.5 L604.5,484.9 L606.5,484.3 L608.6,483.8 L610.7,483.2 L612.7,482.7 L614.8,482.2 L617.0,481.8 L619.1,481.3 L621.2,480.9 L623.3,480.4 L625.3,480.0 L627.3,479.6 L629.3,479.2 L631.3,478.7 L633.4,478.3 L635.4,477.9 L637.5,477.4 L639.4,477.0 L641.4,476.5 L643.3,476.1 L645.2,475.6 L647.1,475.1 L648.9,474.5 L650.8,474.0 L652.6,473.4 L654.5,472.8 L656.3,472.0 L658.2,471.2 L660.1,470.3 L661.8,469.4 L663.6,468.3 L665.3,467.2 L666.9,466.0 L668.6,464.8 L670.2,463.5 L671.9,462.2 L673.6,460.8 L675.2,459.5 L676.8,458.2 L678.4,456.9 L680.0,455.7 L681.7,454.4 L683.3,453.1 L685.0,451.9 L686.7,450.7 L688.3,449.5 L689.9,448.5 L691.6,447.5 L693.4,446.6 L695.2,445.7 L697.2,445.0 L699.2,444.3 L701.2,443.8 L703.3,443.3 L705.3,442.9 L707.4,442.5 L709.4,442.3 L711.4,442.1 L713.3,442.0 L715.0,441.9 L716.2,441.9" fill="none" stroke="url(#dotg)" stroke-width="4" stroke-dasharray="0.01,8.5" stroke-linecap="round"/><circle cx="455" cy="591.7" r="3.6" fill="#e8e048"/><circle cx="455" cy="618.5" r="3.6" fill="#e8e048"/><circle cx="455.5" cy="637.4" r="3.6" fill="#e8e048"/><circle cx="455" cy="613.5" r="5" fill="#ffffff"/><circle cx="158.5" cy="446.5" r="2.2" fill="none" stroke="#a0e0a0" stroke-width="1"/><circle cx="718" cy="442" r="2.3" fill="#c0f0c0"/>
<rect x="158" y="417" width="560" height="223" fill="none" stroke="#4e8a40" stroke-width="2"/>
</svg>

</div></body></html>
